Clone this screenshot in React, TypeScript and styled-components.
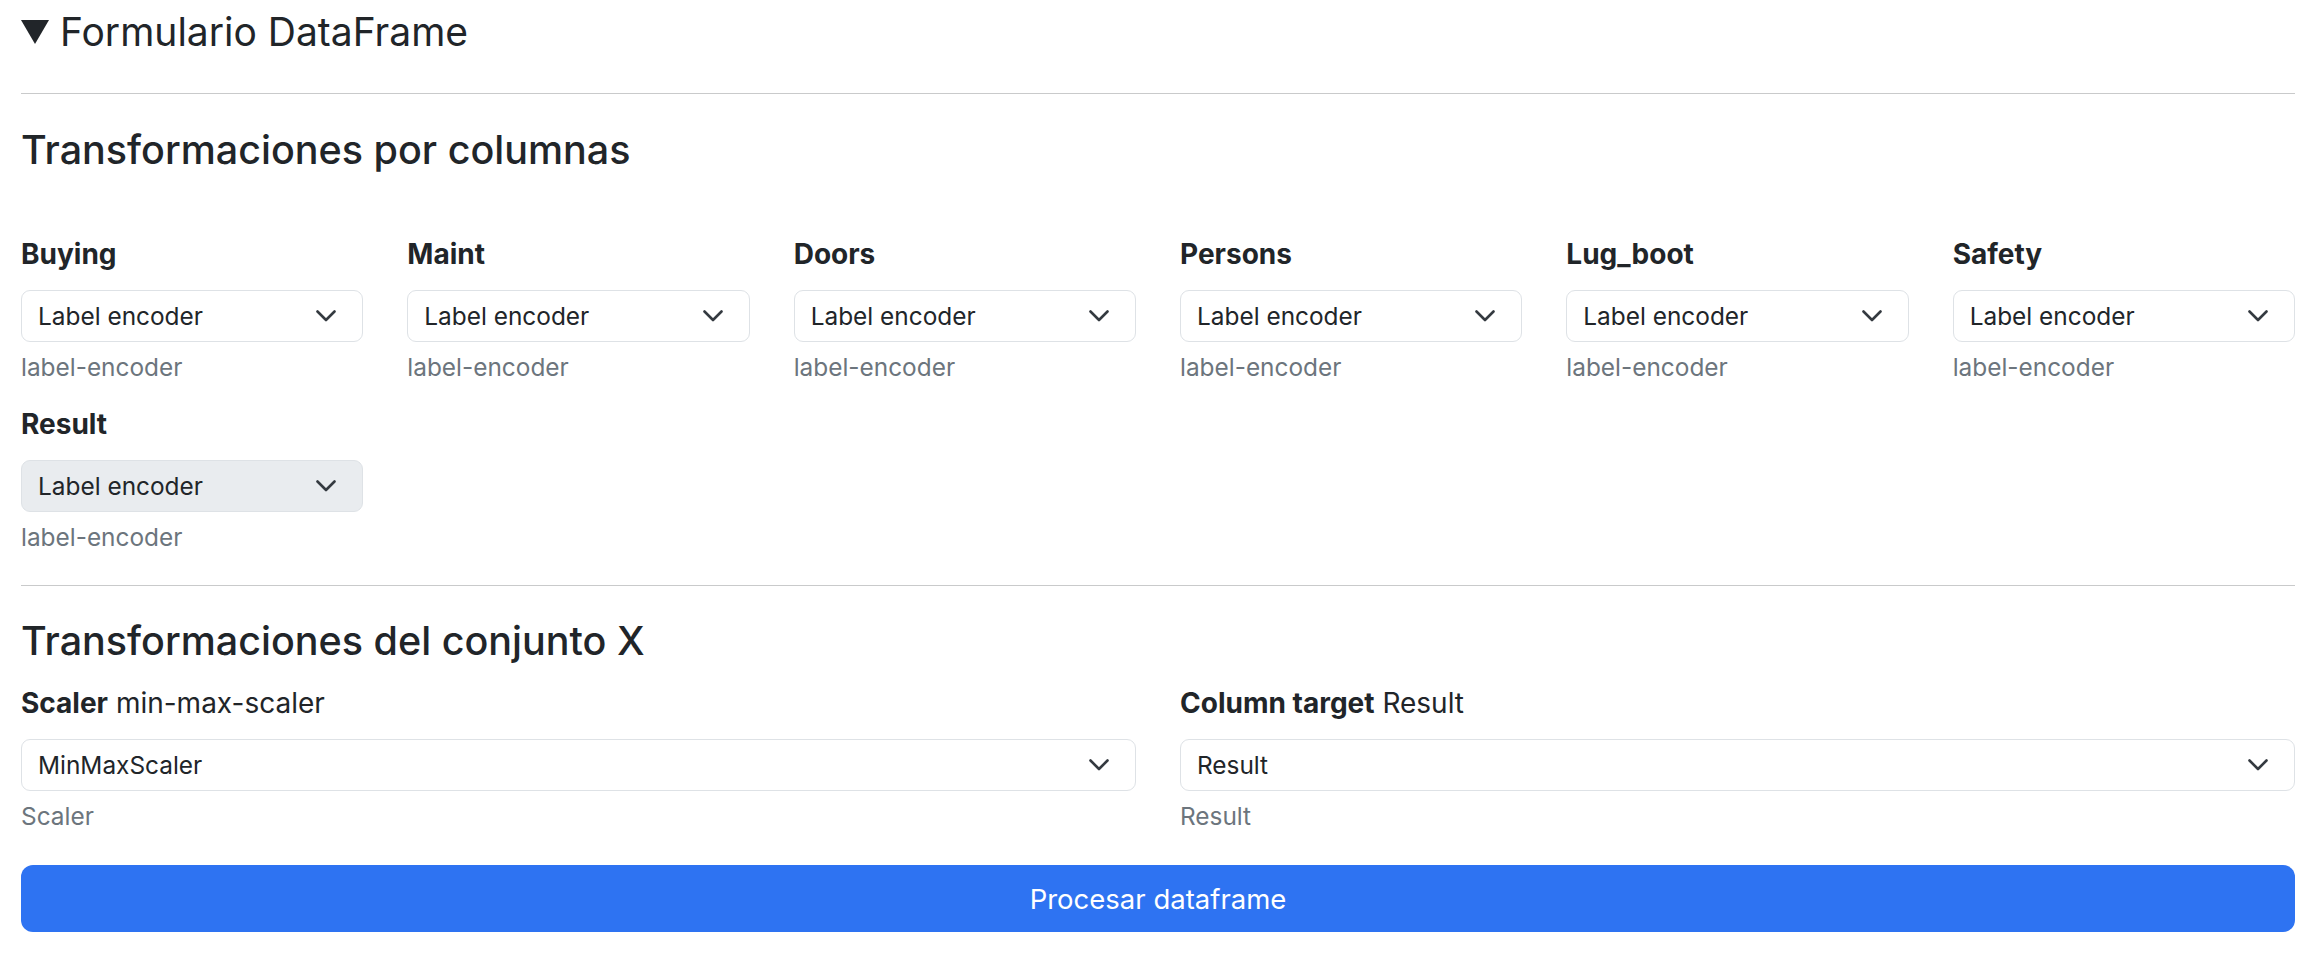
import React from 'react';
import styled, { createGlobalStyle } from 'styled-components';

const GlobalStyle = createGlobalStyle`
  html, body {
    margin: 0;
    padding: 0;
    background: #ffffff;
  }
  body {
    font-family: Inter, "Liberation Sans", sans-serif;
    color: #212529;
  }
`;

const color = {
  text: '#212529',
  muted: '#6c757d',
  border: '#dee2e6',
  disabledBg: '#e9ecef',
  rule: '#c9cacb',
  primary: '#2e73f2',
  chevron: '#343a40',
};

const Page = styled.div`
  padding: 8px 21px 28px;
`;

const Summary = styled.div`
  display: flex;
  align-items: center;
  gap: 11px;
  height: 48px;
  font-size: 39px;
  line-height: 48px;
  font-weight: 400;
`;

const Divider = styled.hr<{ $top: number; $bottom: number }>`
  border: none;
  border-top: 1px solid ${color.rule};
  margin: ${({ $top }) => $top}px 0 ${({ $bottom }) => $bottom}px;
`;

const SectionTitle = styled.h2<{ $bottom: number }>`
  margin: 0 0 ${({ $bottom }) => $bottom}px;
  font-size: 39.5px;
  line-height: 48px;
  font-weight: 500;
`;

const Grid = styled.div<{ $cols: number }>`
  display: grid;
  grid-template-columns: repeat(${({ $cols }) => $cols}, minmax(0, 1fr));
  column-gap: 44px;
  row-gap: 21px;
`;

const Field = styled.div`
  display: flex;
  flex-direction: column;
`;

const Label = styled.div`
  font-size: 28px;
  line-height: 36px;
  margin-bottom: 18px;
  strong {
    font-weight: 700;
  }
`;

const SelectBox = styled.div<{ $disabled?: boolean }>`
  display: flex;
  align-items: center;
  justify-content: space-between;
  height: 52px;
  box-sizing: border-box;
  padding: 0 26px 0 16px;
  border: 1.5px solid ${color.border};
  border-radius: 9px;
  background: ${({ $disabled }) => ($disabled ? color.disabledBg : '#ffffff')};
  font-size: 24.4px;
  color: ${color.text};
`;

const Help = styled.div`
  margin-top: 7px;
  font-size: 24.4px;
  line-height: 36px;
  color: ${color.muted};
`;

const SubmitButton = styled.button`
  display: block;
  width: 100%;
  height: 67px;
  margin-top: 31px;
  border: none;
  border-radius: 12px;
  background: ${color.primary};
  color: #ffffff;
  font-family: inherit;
  font-size: 27.5px;
  cursor: pointer;
`;

const Chevron = () => (
  <svg width="20" height="12" viewBox="0 0 20 12" fill="none">
    <polyline
      points="1.5,1.5 10,10 18.5,1.5"
      stroke={color.chevron}
      strokeWidth="2.6"
      strokeLinecap="round"
      strokeLinejoin="round"
    />
  </svg>
);

const Caret = () => (
  <svg width="28" height="24" viewBox="0 0 28 24">
    <polygon points="0,0 28,0 14,24" fill={color.text} />
  </svg>
);

type SelectFieldProps = {
  label: React.ReactNode;
  value: string;
  help: string;
  disabled?: boolean;
};

const SelectField: React.FC<SelectFieldProps> = ({ label, value, help, disabled }) => (
  <Field>
    <Label>{label}</Label>
    <SelectBox $disabled={disabled}>
      <span>{value}</span>
      <Chevron />
    </SelectBox>
    <Help>{help}</Help>
  </Field>
);

const columns = ['Buying', 'Maint', 'Doors', 'Persons', 'Lug_boot', 'Safety', 'Result'];

export default function App() {
  return (
    <>
      <GlobalStyle />
      <Page>
        <Summary>
          <Caret />
          <span>Formulario DataFrame</span>
        </Summary>
        <Divider $top={37} $bottom={32} />
        <SectionTitle $bottom={62}>Transformaciones por columnas</SectionTitle>
        <Grid $cols={6}>
          {columns.map((c) => (
            <SelectField
              key={c}
              label={<strong>{c}</strong>}
              value="Label encoder"
              help="label-encoder"
              disabled={c === 'Result'}
            />
          ))}
        </Grid>
        <Divider $top={30} $bottom={31} />
        <SectionTitle $bottom={20}>Transformaciones del conjunto X</SectionTitle>
        <Grid $cols={2}>
          <SelectField
            label={
              <>
                <strong>Scaler</strong> min-max-scaler
              </>
            }
            value="MinMaxScaler"
            help="Scaler"
          />
          <SelectField
            label={
              <>
                <strong>Column target</strong> Result
              </>
            }
            value="Result"
            help="Result"
          />
        </Grid>
        <SubmitButton>Procesar dataframe</SubmitButton>
      </Page>
    </>
  );
}
